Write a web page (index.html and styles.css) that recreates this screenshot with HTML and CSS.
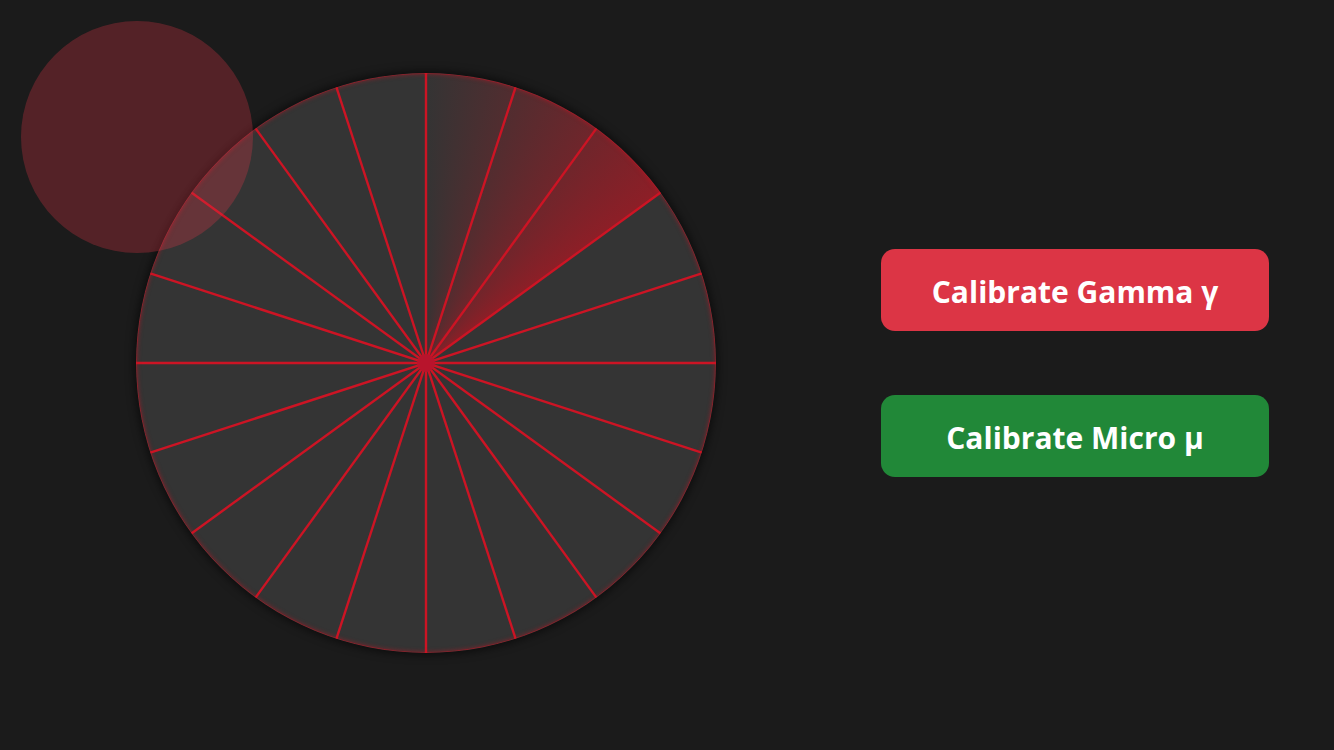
FILE: index.html
```html
<!DOCTYPE html>
<html lang="en">
<head>
<meta charset="utf-8">
<title>Calibration Wheel</title>
<link rel="stylesheet" href="styles.css">
</head>
<body>
<div class="page">
  <div class="wheel">
    <div class="sweep"></div>
    <svg class="spokes" viewBox="-290 -290 580 580" width="580" height="580">
      <g stroke="#cc1424" stroke-width="2.4">
        <line x1="0" y1="-290" x2="0" y2="290" transform="rotate(0)"/>
        <line x1="0" y1="-290" x2="0" y2="290" transform="rotate(18)"/>
        <line x1="0" y1="-290" x2="0" y2="290" transform="rotate(36)"/>
        <line x1="0" y1="-290" x2="0" y2="290" transform="rotate(54)"/>
        <line x1="0" y1="-290" x2="0" y2="290" transform="rotate(72)"/>
        <line x1="0" y1="-290" x2="0" y2="290" transform="rotate(90)"/>
        <line x1="0" y1="-290" x2="0" y2="290" transform="rotate(108)"/>
        <line x1="0" y1="-290" x2="0" y2="290" transform="rotate(126)"/>
        <line x1="0" y1="-290" x2="0" y2="290" transform="rotate(144)"/>
        <line x1="0" y1="-290" x2="0" y2="290" transform="rotate(162)"/>
      </g>
      <circle cx="0" cy="0" r="9" fill="#b8142c"/>
    </svg>
    <div class="rim"></div>
  </div>
  <div class="actions">
    <button class="btn btn-gamma">Calibrate Gamma γ</button>
    <button class="btn btn-micro">Calibrate Micro μ</button>
  </div>
  <div class="orb"></div>
</div>
</body>
</html>
```
FILE: styles.css
```css
html, body {
  margin: 0;
  padding: 0;
  background: #1b1b1b;
  height: 100%;
  overflow: hidden;
}
.page {
  position: relative;
  display: flex;
  align-items: center;
  padding: 73px 0 0 136px;
  gap: 165px;
  font-family: "Open Sans", "Noto Sans", sans-serif;
}
.wheel {
  position: relative;
  width: 580px;
  height: 580px;
  border-radius: 50%;
  background: #343434;
  overflow: hidden;
  box-shadow: 0 0 8px 2px rgba(0, 0, 0, 0.55);
  flex: none;
}
.sweep {
  position: absolute;
  inset: 0;
  background: conic-gradient(from 0deg,
    rgba(200, 16, 30, 0) 0deg,
    rgba(200, 16, 30, 0.6) 54deg,
    rgba(200, 16, 30, 0) 54deg);
}
.spokes {
  position: absolute;
  left: 0;
  top: 0;
  display: block;
}
.rim {
  position: absolute;
  inset: 0;
  border-radius: 50%;
  border: 1.5px solid rgba(204, 20, 36, 0.55);
  box-shadow: inset 0 0 4px rgba(204, 20, 36, 0.5);
}
.actions {
  display: flex;
  flex-direction: column;
  gap: 64px;
}
.btn {
  width: 388px;
  height: 82px;
  border: none;
  border-radius: 14px;
  color: #fff;
  font-family: "Open Sans", "Noto Sans", sans-serif;
  font-weight: 700;
  font-size: 30px;
  line-height: 1;
  padding: 4px 0 0;
  cursor: pointer;
}
.btn-gamma { background: #dc3545; }
.btn-micro { background: #218838; }
.orb {
  position: absolute;
  left: 21px;
  top: 21px;
  width: 232px;
  height: 232px;
  border-radius: 50%;
  background: rgba(220, 53, 69, 0.3);
}
```
